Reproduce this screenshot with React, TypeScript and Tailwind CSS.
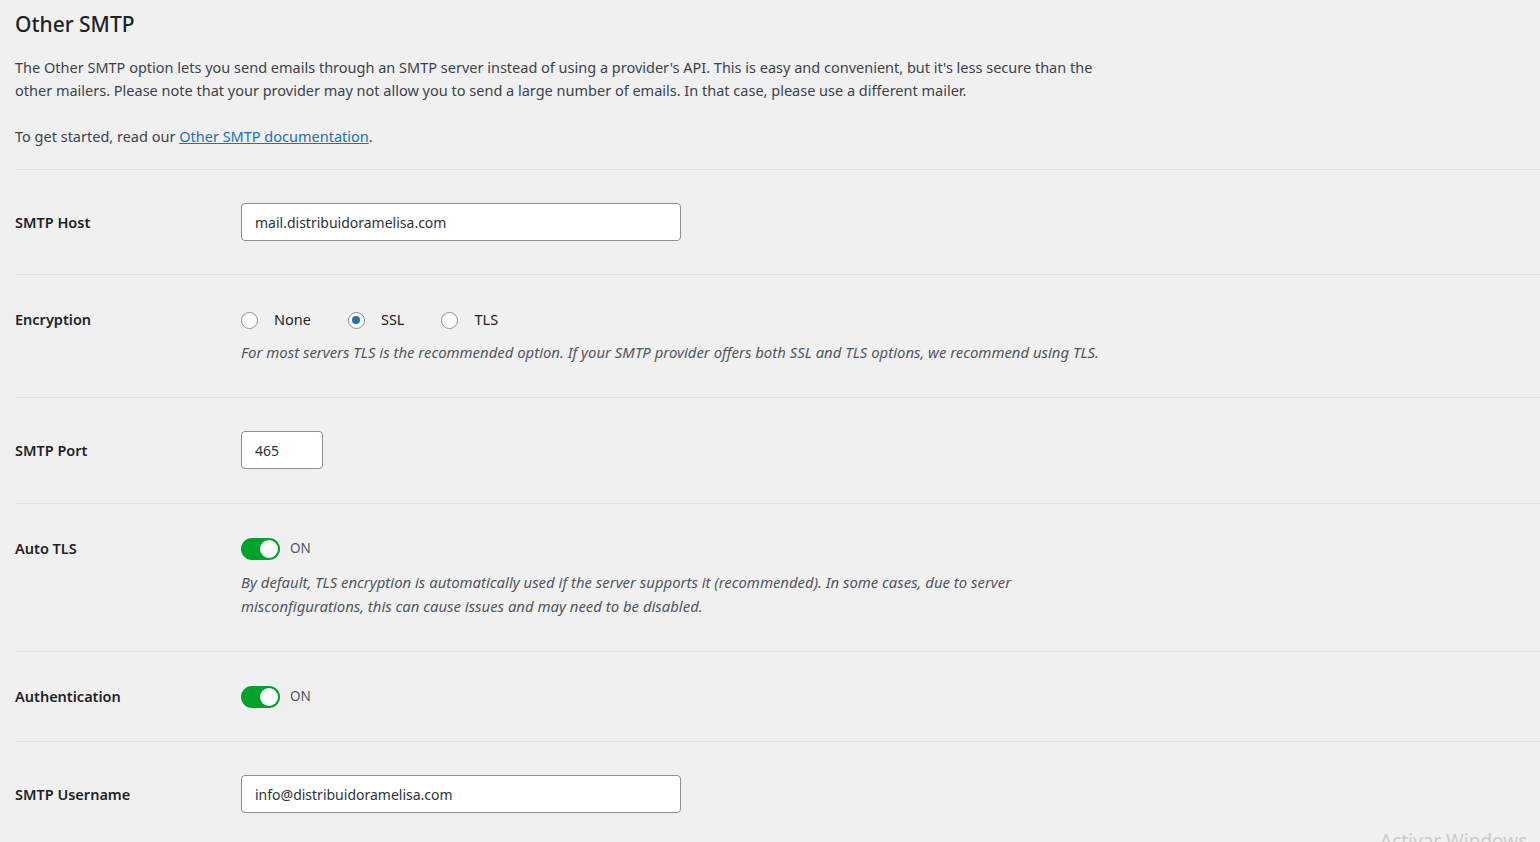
import React, { useState } from "react";

const font = { fontFamily: '"Noto Sans", "Open Sans", sans-serif' };

const Row = ({
  label,
  children,
  center,
  className = "py-[33px]",
}: {
  label: string;
  children: React.ReactNode;
  center?: boolean;
  className?: string;
}) => (
  <div className={`flex border-t border-[#e0e0e0] ${className} ${center ? "items-center" : "items-start"}`}>
    <div className="w-[226px] shrink-0 text-[14.5px] font-semibold leading-[22px] text-[#1d2327]">{label}</div>
    <div className="flex-1">{children}</div>
  </div>
);

const TextInput = ({ value, width }: { value: string; width: string }) => (
  <input
    type="text"
    defaultValue={value}
    className={`${width} h-[38px] rounded-[4px] border border-[#8c8f94] bg-white px-[13px] text-[14px] text-[#2c3338] outline-none`}
  />
);

const Toggle = ({ on }: { on: boolean }) => (
  <div className="flex h-[23px] items-center gap-[10px]">
    <span
      className={`flex h-[22px] w-[39px] items-center rounded-full px-[2px] ${
        on ? "justify-end bg-[#00a32a]" : "justify-start bg-[#8c8f94]"
      }`}
    >
      <span className="h-[18px] w-[18px] rounded-full bg-white" />
    </span>
    <span className="text-[13.5px] text-[#50575e]">{on ? "ON" : "OFF"}</span>
  </div>
);

const Radio = ({ label, checked, onClick }: { label: string; checked: boolean; onClick: () => void }) => (
  <label className="mr-[37px] flex cursor-pointer items-center gap-[16px]" onClick={onClick}>
    <span className="flex h-[17px] w-[17px] items-center justify-center rounded-full border border-[#8c8f94] bg-white">
      {checked && <span className="h-[8px] w-[8px] rounded-full bg-[#2271b1]" />}
    </span>
    <span className="text-[14.5px] text-[#1d2327]">{label}</span>
  </label>
);

export default function App() {
  const [enc, setEnc] = useState("SSL");

  return (
    <div className="relative min-h-screen overflow-hidden bg-[#f0f0f1] pl-[15px]" style={font}>
      <h2 className="pt-[9px] text-[21px] font-medium leading-[30px] text-[#1d2327]">Other SMTP</h2>
      <div className="mt-[17px] whitespace-nowrap text-[14.5px] leading-[23px] text-[#3c434a]">
        <p>
          The Other SMTP option lets you send emails through an SMTP server instead of using a provider's API. This is
          easy and convenient, but it's less secure than the
          <br />
          other mailers. Please note that your provider may not allow you to send a large number of emails. In that case,
          please use a different mailer.
        </p>
        <p className="mt-[23px]">
          To get started, read our{" "}
          <a href="#" className="text-[#2271b1] underline">
            Other SMTP documentation
          </a>
          .
        </p>
      </div>

      <div className="mt-[21px]">
        <Row label="SMTP Host" center>
          <TextInput value="mail.distribuidoramelisa.com" width="w-[440px]" />
        </Row>

        <Row label="Encryption">
          <div className="flex h-6 items-center">
            {["None", "SSL", "TLS"].map(o => (
              <Radio key={o} label={o} checked={enc === o} onClick={() => setEnc(o)} />
            ))}
          </div>
          <p className="mt-[8px] whitespace-nowrap text-[14.9px] italic leading-6 text-[#50575e]">
            For most servers TLS is the recommended option. If your SMTP provider offers both SSL and TLS options, we
            recommend using TLS.
          </p>
        </Row>

        <Row label="SMTP Port" center className="pb-[34px] pt-[33px]">
          <TextInput value="465" width="w-[82px]" />
        </Row>

        <Row label="Auto TLS">
          <Toggle on />
          <p className="mt-[10px] whitespace-nowrap text-[14.9px] italic leading-6 text-[#50575e]">
            By default, TLS encryption is automatically used if the server supports it (recommended). In some cases, due
            to server
            <br />
            misconfigurations, this can cause issues and may need to be disabled.
          </p>
        </Row>

        <Row label="Authentication">
          <Toggle on />
        </Row>

        <Row label="SMTP Username" center>
          <TextInput value="info@distribuidoramelisa.com" width="w-[440px]" />
        </Row>
      </div>

      <div className="pointer-events-none absolute left-[1380px] top-[827px] whitespace-nowrap text-[19px] text-[#cbcbcb]">
        Activar Windows
      </div>
    </div>
  );
}
